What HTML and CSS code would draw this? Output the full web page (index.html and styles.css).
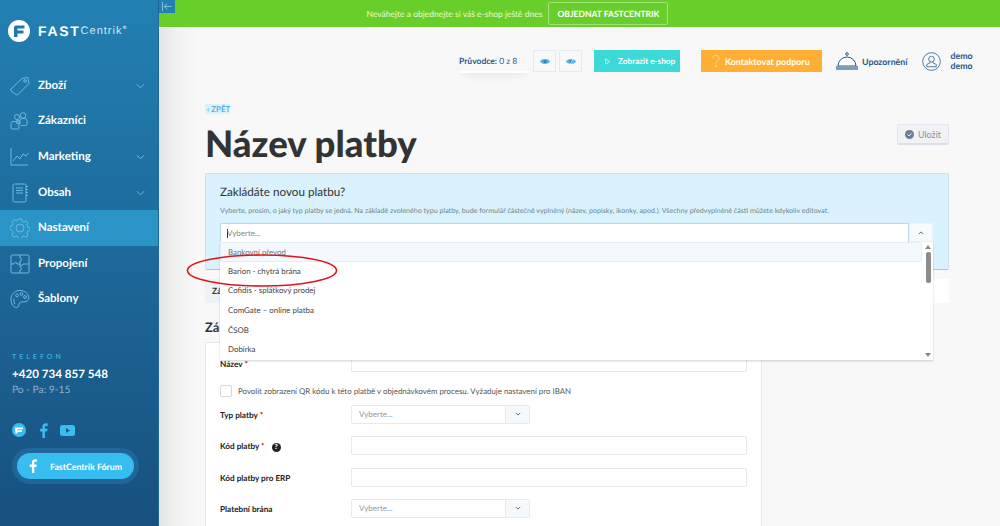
FILE: index.html
```html
<!DOCTYPE html>
<html lang="cs">
<head>
<meta charset="utf-8">
<title>Název platby</title>
<link rel="stylesheet" href="styles.css">
</head>
<body>
<div class="app">
  <aside class="sidebar">
    <div class="logo">
      <svg class="logo-mark" viewBox="0 0 22 22"><circle cx="11" cy="11" r="11" fill="#fff"/><path d="M6 7.500a2 2 0 0 1 2-2h8.500v3H9.500v2h6v3h-6v3.500H6z" fill="#2079ab"/></svg>
      <span class="logo-fast">FAST</span><span class="logo-centrik">Centrik</span><sup class="logo-reg">®</sup>
    </div>
    <nav class="menu">
      <a class="menu-item"><svg class="menu-icon" viewBox="0 0 20 20"><path d="M1 13 12 2.500l6-1 1 6L8 18.500a1.500 1.500 0 0 1-2 0l-5-3.500a1.500 1.500 0 0 1 0-2z"/><circle cx="15" cy="5" r="1.300"/></svg><span class="menu-label">Zboží</span><svg class="chev" viewBox="0 0 10 6"><path d="M1 1l4 4 4-4"/></svg></a>
      <a class="menu-item"><svg class="menu-icon" viewBox="0 0 20 20"><circle cx="7" cy="6" r="2.500"/><circle cx="13" cy="4.500" r="2.800"/><path d="M1 15v-2.500a2 2 0 0 1 2-2h4a2 2 0 0 1 2 2V17a1 1 0 0 1-1 1H2a1 1 0 0 1-1-1z"/><path d="M10 13v-3.500a2 2 0 0 1 2-2h3a2 2 0 0 1 2 2V13a1.500 1.500 0 0 1-1.500 1.500H11"/><circle cx="8" cy="11" r="1.800"/></svg><span class="menu-label">Zákazníci</span></a>
      <a class="menu-item"><svg class="menu-icon" viewBox="0 0 20 20"><path d="M1 1v17h17"/><path d="M3 14l4-5 3 3 3-5 3 2 2.500-3"/></svg><span class="menu-label">Marketing</span><svg class="chev" viewBox="0 0 10 6"><path d="M1 1l4 4 4-4"/></svg></a>
      <a class="menu-item"><svg class="menu-icon" viewBox="0 0 20 20"><rect x="3" y="1" width="13" height="18" rx="1.500"/><path d="M6 5h7M6 7.500h7M6 10h7M16 3.500h2M16 6.500h2M16 9.500h2M16 12.500h2"/></svg><span class="menu-label">Obsah</span><svg class="chev" viewBox="0 0 10 6"><path d="M1 1l4 4 4-4"/></svg></a>
      <a class="menu-item active"><svg class="menu-icon" viewBox="0 0 20 20"><path d="M8.500 1h3l.6 2.500 1.800.8 2.200-1.300 2 2-1.300 2.200.8 1.800 2.400.6v3l-2.400.6-.8 1.800 1.300 2.200-2 2-2.200-1.300-1.800.8-.6 2.300h-3l-.6-2.300-1.800-.8-2.200 1.300-2-2 1.300-2.200-.8-1.800L0 11.100v-3l2.400-.6.8-1.800L1.900 3.500l2-2 2.200 1.300 1.800-.8z"/><circle cx="10" cy="10" r="4"/></svg><span class="menu-label">Nastavení</span></a>
      <a class="menu-item"><svg class="menu-icon" viewBox="0 0 20 20"><rect x="1" y="1" width="18" height="18" rx="1"/><path d="M1 10h3a1.500 1.500 0 1 1 3 0h3M10 1v3a1.500 1.500 0 1 1 0 3v3a1.500 1.500 0 1 0 3 0h6M10 10v3a1.500 1.500 0 1 1 0 3v3"/></svg><span class="menu-label">Propojení</span></a>
      <a class="menu-item"><svg class="menu-icon" viewBox="0 0 20 20"><path d="M11 1.500C5 1 1 5 1 10.500c0 4.500 2.500 8 5.500 8 2.500 0 2.200-3 3-4.500 1-1.800 4-.5 6.500-1.500 2.500-1 3.500-3 2.500-5.500C17.500 4 14.500 1.800 11 1.500z"/><circle cx="7" cy="6.500" r="1.400"/><circle cx="11.500" cy="5" r="1.400"/><circle cx="15" cy="8" r="1.400"/><path d="M4 9.500c-.5 2 0 4 1 5.500"/></svg><span class="menu-label">Šablony</span></a>
    </nav>
    <div class="contact">
      <div class="contact-title">TELEFON</div>
      <div class="contact-phone">+420 734 857 548</div>
      <div class="contact-hours">Po - Pa: 9-15</div>
    </div>
    <div class="socials">
      <svg class="social-f" viewBox="0 0 14 14"><circle cx="7" cy="7" r="7" fill="#38bdf0"/><path d="M3 4.500h8v1.800H5.500v1h4.500v1.700H5.500V10.500H3.500z" fill="#fff"/></svg>
      <svg class="social-fb" viewBox="0 0 9 16"><path d="M6 16V9h2.400l.4-2.800H6V4.500c0-.8.300-1.300 1.400-1.300H9V.5C8.600.4 7.800.3 6.900.3 4.800.3 3.300 1.600 3.300 4v2.200H.8V9h2.500v7z" fill="#38bdf0"/></svg>
      <svg class="social-yt" viewBox="0 0 15 11"><rect width="15" height="11" rx="2.500" fill="#38bdf0"/><path d="M6 3l4 2.500L6 8z" fill="#1a5b8c"/></svg>
    </div>
    <div class="forum-wrap">
      <a class="forum">
        <svg class="forum-f" viewBox="0 0 9 16"><path d="M6 16V9h2.400l.4-2.800H6V4.500c0-.8.300-1.300 1.400-1.300H9V.5C8.600.4 7.800.3 6.900.3 4.800.3 3.300 1.600 3.300 4v2.200H.8V9h2.500v7z" fill="#fff"/></svg>
        <span>FastCentrik Fórum</span>
      </a>
    </div>
  </aside>

  <div class="main">
    <button class="collapse" aria-label="Sbalit"><svg viewBox="0 0 12 10"><path d="M1 0v10M11 5H3M6 2 3 5l3 3"/></svg></button>
    <div class="promo">
      <span>Neváhejte a objednejte si váš e-shop ještě dnes</span>
      <a class="promo-btn">OBJEDNAT FASTCENTRIK</a>
    </div>
    <header class="topbar">
      <div class="guide"><b>Průvodce:</b> 0 z 8</div>
      <button class="eye-btn"><svg viewBox="0 0 12 8"><path d="M0 4c2-4 10-4 12 0-2 4-10 4-12 0z" fill="#4db4e6"/><circle cx="6" cy="4" r="1.900" fill="#2488c0"/></svg></button>
      <button class="eye-btn"><svg viewBox="0 0 12 8"><path d="M0 4c2-4 10-4 12 0-2 4-10 4-12 0z" fill="#4db4e6"/><circle cx="6" cy="4" r="1.900" fill="#2488c0"/><path d="M5 8 9 0" stroke="#f6f8f9"/></svg></button>
      <a class="btn-eshop"><svg viewBox="0 0 6 8"><path d="M.5.800v6.400L5.500 4z"/></svg>Zobrazit e-shop</a>
      <a class="btn-support"><svg viewBox="0 0 9 14"><path d="M1 4a3.500 3.500 0 1 1 5.500 2.800C5 8 4.500 8.500 4.500 10"/><circle cx="4.500" cy="12.500" r="1"/></svg>Kontaktovat podporu</a>
      <a class="notif">
        <svg viewBox="0 0 22 19"><circle cx="11" cy="2" r="1.300" fill="none" stroke="#1e5a8a"/><path d="M2 14a9 9 0 0 1 18 0z" fill="#fff" stroke="#1e5a8a"/><rect y="14" width="22" height="4" fill="#7e9db8"/></svg>
        <span>Upozornění</span>
      </a>
      <a class="user">
        <svg viewBox="0 0 20 20" fill="none" stroke="#1e5a8a" stroke-width=".8"><circle cx="10" cy="10" r="9.300"/><circle cx="10" cy="7.500" r="3"/><path d="M8.500 10.500v1L5 13v2.500h10V13l-3.500-1.500v-1"/></svg>
        <span>demo<br>demo</span>
      </a>
    </header>

    <div class="content">
      <a class="back">‹ ZPĚT</a>
      <div class="title-row">
        <h1>Název platby</h1>
        <button class="save"><svg viewBox="0 0 10 10"><circle cx="5" cy="5" r="5" fill="#6d7a99"/><path d="M2.800 5l1.600 1.600 2.800-3" fill="none" stroke="#fff"/></svg>Uložit</button>
      </div>

      <section class="notice">
        <h2>Zakládáte novou platbu?</h2>
        <p>Vyberte, prosím, o jaký typ platby se jedná. Na základě zvoleného typu platby, bude formulář částečně vyplněný (název, popisky, ikonky, apod.). Všechny předvyplněné části můžete kdykoliv editovat.</p>
        <div class="combo">
          <div class="combo-input"><i class="caret"></i>Vyberte...</div>
          <div class="combo-arrow"><svg viewBox="0 0 8 5"><path d="M1 4l3-3 3 3"/></svg></div>
        </div>
        <div class="dropdown">
          <ul class="options">
            <li class="option hover">Bankovní převod</li>
            <li class="option">Barion - chytrá brána</li>
            <li class="option">Cofidis - splátkový prodej</li>
            <li class="option">ComGate – online platba</li>
            <li class="option">ČSOB</li>
            <li class="option">Dobírka</li>
          </ul>
          <div class="scroll">
            <i class="scroll-up"></i>
            <i class="scroll-thumb"></i>
            <i class="scroll-down"></i>
          </div>
        </div>
        <svg class="annotation" viewBox="0 0 152 33"><ellipse cx="76" cy="16.500" rx="74.500" ry="15.500" fill="none" stroke="#e0141c" stroke-width="1.600"/></svg>
      </section>

      <div class="tabs"><span class="tab">Základní</span></div>
      <h3 class="section-title">Základní informace</h3>
      <section class="card">
        <div class="row row-name"><label>Název <em>*</em></label><div class="input"></div></div>
        <div class="check-row"><i class="checkbox"></i><span>Povolit zobrazení QR kódu k této platbě v objednávkovém procesu. Vyžaduje nastavení pro IBAN</span></div>
        <div class="row"><label>Typ platby <em>*</em></label><div class="select"><span>Vyberte...</span><i><svg viewBox="0 0 8 5"><path d="M1 1l3 3 3-3"/></svg></i></div></div>
        <div class="row"><label>Kód platby <em>*</em><b class="help">?</b></label><div class="input"></div></div>
        <div class="row"><label>Kód platby pro ERP</label><div class="input"></div></div>
        <div class="row"><label>Platební brána</label><div class="select"><span>Vyberte...</span><i><svg viewBox="0 0 8 5"><path d="M1 1l3 3 3-3"/></svg></i></div></div>
      </section>
    </div>
  </div>
</div>
</body>
</html>
```

FILE: styles.css
```css
* { box-sizing: border-box; }
html, body { margin: 0; height: 100%; overflow: hidden; }
body { font-family: Lato, "Open Sans", sans-serif; color: #333; background: #f7f7f7; text-rendering: geometricPrecision; }
a { text-decoration: none; }
button { font-family: inherit; }
.app { display: flex; width: 1000px; height: 526px; overflow: hidden; }

/* Sidebar */
.sidebar { width: 159px; flex: none; background: linear-gradient(180deg, #2280b2 0%, #17507f 100%); color: #fff; border-right: 1px solid #1d6a9a; padding-top: 20px; }
.logo { display: flex; align-items: center; height: 22px; padding-left: 8px; }
.logo-mark { width: 22px; height: 22px; margin-right: 8px; }
.logo-fast { font: bold 14px "Liberation Sans", sans-serif; letter-spacing: 1.700px; }
.logo-centrik { font: 11px "Liberation Sans", sans-serif; margin-left: 0; color: #d3e6f1; letter-spacing: 1px; }
.logo-reg { font-size: 5px; line-height: 1; margin-bottom: 6px; }
.menu { margin-top: 26px; }
.menu-item { display: flex; align-items: center; height: 35.600px; padding-left: 10px; color: #fff; position: relative; }
.menu-item.active { background: #2a94c7; }
.menu-icon { width: 20px; height: 20px; fill: none; stroke: #6db8df; stroke-width: 1; margin-right: 8px; flex: none; }
.menu-label { font-size: 11.500px; font-weight: 700; padding-bottom: 1px; }
.chev { width: 9px; height: 6px; margin-left: auto; margin-right: 13px; fill: none; stroke: #7fc0e2; stroke-width: 1; }
.contact { margin-top: 35px; padding-left: 12px; }
.contact-title { font-size: 7px; font-weight: 700; letter-spacing: 3px; color: #38a9de; line-height: 10px; }
.contact-phone { font-size: 11.600px; font-weight: 700; line-height: 16px; margin-top: 5px; }
.contact-hours { font-size: 10.200px; color: #90adc6; line-height: 15px; }
.socials { display: flex; align-items: center; margin: 24px 0 0 12px; height: 16px; }
.social-f { width: 14px; height: 14px; }
.social-fb { width: 9px; height: 15px; margin-left: 13px; }
.social-yt { width: 15px; height: 11px; margin-left: 12px; }
.forum-wrap { width: 127px; height: 36px; margin: 10px 0 0 12px; padding: 5px; border-radius: 18px; background: #21669a; }
.forum { display: flex; align-items: center; height: 26px; border-radius: 13px; background: #38bdf0; color: #fff; font-size: 8.800px; font-weight: 700; padding-left: 12px; }
.forum-f { width: 8px; height: 14px; margin-right: 13px; }

/* Main */
.main { flex: 1; min-width: 0; position: relative; background: linear-gradient(90deg, #e4e4e4 0, #f2f2f2 18px, #f8f8f8 40px); }
.collapse { position: absolute; left: 0; top: 0; width: 16px; height: 13px; padding: 2px 2px; border: 0; background: #2280b2; display: flex; z-index: 2; }
.collapse svg { width: 12px; height: 9px; fill: none; stroke: #a6d8f0; stroke-width: .8; }
.promo { height: 28px; background: #68cf2a; border-bottom: 1px solid #fff; display: flex; align-items: center; justify-content: center; gap: 6px; color: #e9f8dc; font-size: 8.500px; padding-right: 124px; }
.promo-btn { height: 23px; width: 120px; border: 1px solid #a2e276; border-radius: 2px; display: flex; align-items: center; justify-content: center; color: #fff; font-weight: 700; font-size: 8.500px; }
.topbar { display: flex; align-items: center; height: 66px; padding-left: 300px; }
.guide { width: 70px; height: 20px; font-size: 8.500px; color: #1e5a8a; border-bottom: 2px solid #fff; box-shadow: 0 6px 8px -4px rgba(0,0,0,.08); line-height: 16px; margin-top: 3px; white-space: nowrap; }
.eye-btn { width: 23px; height: 22px; border: 1px solid #e3eaef; background: #f6f8f9; display: flex; align-items: center; justify-content: center; padding: 0; margin-left: 3px; }
.eye-btn:first-of-type { margin-left: 4px; }
.eye-btn svg { width: 10px; height: 7px; }
.btn-eshop { display: flex; align-items: center; margin-left: 12px; width: 86px; height: 22px; background: #3dd9d6; color: #fff; font-size: 8.200px; font-weight: 700; padding-left: 11px; }
.btn-eshop svg { width: 5px; height: 7px; margin-right: 8px; fill: none; stroke: #fff; stroke-width: .8; }
.btn-support { display: flex; align-items: center; margin-left: 21px; width: 121px; height: 22px; background: #ffb034; color: #fff; font-size: 8.900px; font-weight: 700; padding-left: 11px; }
.btn-support svg { width: 8px; height: 14px; margin-right: 5px; fill: none; stroke: #ffe3b0; stroke-width: .8; }
.notif { display: flex; align-items: center; margin-left: 14px; color: #1e5a8a; font-size: 8.800px; font-weight: 700; }
.notif svg { width: 22px; height: 19px; margin-right: 4px; }
.user { display: flex; align-items: center; margin-left: 14px; color: #1e5a8a; font-size: 8.800px; font-weight: 700; line-height: 10px; }
.user svg { width: 19px; height: 19px; margin-right: 10px; }

.content { padding: 10px 51px 0 46px; position: relative; }
.back { display: block; width: 25px; height: 10px; background: #d9f2fd; color: #3a9bd0; font-size: 8px; line-height: 10px; padding-left: 2px; border-radius: 1px; white-space: nowrap; }
.title-row { display: flex; justify-content: space-between; height: 59px; }
h1 { margin: 4px 0 0; font-size: 36.600px; font-weight: 900; color: #333; line-height: 50px; }
.save { width: 52px; height: 21px; margin-top: 10px; border: 1px solid #e3e5ec; border-bottom: 2px solid #dcdfe8; background: #f1f2f6; color: #8b93a5; font-size: 9px; display: flex; align-items: center; justify-content: center; gap: 4px; padding: 0; border-radius: 2px; }
.save svg { width: 9px; height: 9px; }

.notice { position: relative; height: 97px; background: #d9f2fd; border: 1px solid #c5e4f2; border-bottom: 1px solid #9ccfe6; border-radius: 2px; padding: 10px 15px 0 14px; }
.notice h2 { margin: 0; font-size: 11.700px; font-weight: 400; color: #333; line-height: 16px; }
.notice p { margin: 6px 0 0; font-size: 7.080px; line-height: 10px; color: #71858f; white-space: nowrap; }
.combo { display: flex; height: 19px; margin-top: 7px; }
.combo-input { flex: 1; background: #fff; border: 1px solid #b9d9e8; border-bottom: 0; border-radius: 2px 0 0 0; font-size: 8px; line-height: 18px; color: #8a8a8a; padding-left: 6px; display: flex; align-items: center; }
.caret { width: 1px; height: 9px; background: #333; margin-right: -1px; }
.combo-arrow { width: 24px; background: #f5fafd; display: flex; align-items: center; justify-content: center; border: 1px solid #eef3f6; }
.combo-arrow svg { width: 6px; height: 4px; fill: none; stroke: #444; stroke-width: 1; }
.dropdown { position: absolute; z-index: 3; left: 14px; top: 68px; width: 713px; height: 118px; background: #fff; box-shadow: 0 1px 2px rgba(0,0,0,.18); display: flex; }
.options { list-style: none; margin: 0; padding: 0 1px 0 0; flex: 1; }
.option { height: 19.700px; font-size: 7.900px; line-height: 19px; color: #444; padding-left: 8px; }
.option.hover { background: #f3f9fd; border: 1px solid #e7eef3; border-radius: 1px; padding-left: 7px; color: #6d7378; }
.scroll { width: 10px; display: flex; flex-direction: column; align-items: center; padding: 3px 0; background: #fff; }
.scroll-up { border: 3px solid transparent; border-top: 0; border-bottom: 4px solid #888; }
.scroll-thumb { width: 5px; height: 31px; border-radius: 2px; background: #8c8c8c; margin-top: 3px; }
.scroll-down { border: 3px solid transparent; border-bottom: 0; border-top: 4px solid #888; margin-top: auto; }
.annotation { position: absolute; z-index: 4; left: -20px; top: 80px; width: 152px; height: 33px; }

.tabs { height: 24px; margin-top: 9px; background: #fff; }
.tab { display: inline-block; height: 24px; padding: 0 8px 0 7px; background: #eef1f7; font-size: 8.500px; font-weight: 700; line-height: 24px; }
.section-title { margin: 14px 0 0; font-size: 13px; font-weight: 700; line-height: 20px; height: 25px; color: #333; }
.card { width: 557px; height: 300px; background: #fff; border: 1px solid #e8e8e8; padding: 10px 14px 0 14px; }
.row { display: flex; align-items: center; height: 19px; margin-bottom: 12.330px; }
.row label { width: 131px; font-size: 8.200px; font-weight: 700; color: #222; flex: none; white-space: nowrap; padding-top: 2px; }
.row em { color: #d0101a; font-style: normal; }
.help { display: inline-block; width: 9px; height: 9px; border-radius: 50%; background: #222; color: #fff; font-size: 7px; line-height: 9px; text-align: center; margin-left: 7px; }
.input { width: 396px; height: 19px; border: 1px solid #e6e9ee; border-radius: 2px; background: #fff; }
.check-row { display: flex; align-items: center; font-size: 7.900px; color: #555; height: 14px; margin: 0 0 6.670px; white-space: nowrap; }
.checkbox { width: 12px; height: 12px; border: 1px solid #d8d8d8; border-radius: 2px; margin-right: 6px; flex: none; }
.select { width: 179px; height: 19px; display: flex; border: 1px solid #e6e9ee; border-radius: 2px; font-size: 8px; color: #999; line-height: 17px; }
.select span { flex: 1; padding-left: 7px; }
.select i { width: 24px; background: #f5f9fb; border-left: 1px solid #e6e9ee; display: flex; align-items: center; justify-content: center; }
.select svg { width: 6px; height: 4px; fill: none; stroke: #444; stroke-width: 1; }
```
